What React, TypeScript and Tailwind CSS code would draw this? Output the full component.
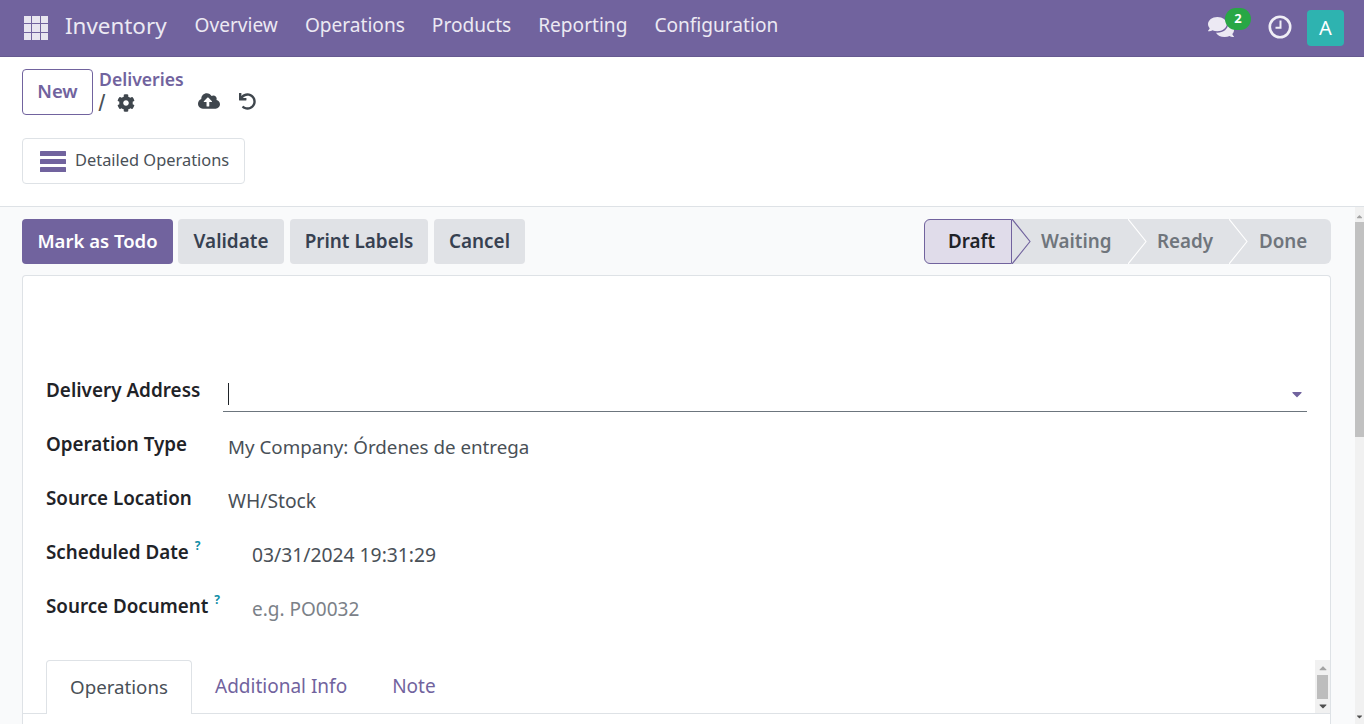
import React from "react";
import { FaComments, FaCog, FaCloudUploadAlt, FaUndo, FaCaretDown, FaCaretUp } from "react-icons/fa";

const FONT = "font-['Noto_Sans','Open_Sans',sans-serif]";

function GridIcon() {
  return (
    <div className="grid grid-cols-3 gap-[1px] w-[24px] h-[24px]">
      {Array.from({ length: 9 }).map((_, i) => (
        <div key={i} className="bg-[#e8e6f0]" />
      ))}
    </div>
  );
}

function ClockIcon() {
  return (
    <svg width="24" height="24" viewBox="0 0 24 24" fill="none" stroke="#f0eef6" className="mb-[2px] mr-[15px]">
      <circle cx="12" cy="12" r="10.2" strokeWidth="2.6" />
      <polyline points="12.5,5.5 12.5,12.8 7.5,12.8" strokeWidth="2" />
    </svg>
  );
}

function BarsIcon() {
  return (
    <svg width="26" height="21" viewBox="0 0 26 21" fill="#71639e" className="mr-[9px] mt-[2px] shrink-0">
      <rect x="0" y="0" width="26" height="5" rx="0.5" />
      <rect x="0" y="8" width="26" height="5" rx="0.5" />
      <rect x="0" y="16" width="26" height="5" rx="0.5" />
    </svg>
  );
}

function Chevron({ stroke, fill, className }: { stroke: string; fill: string; className: string }) {
  return (
    <svg className={`absolute z-10 ${className}`} width="19" height="45" viewBox="0 0 19 45">
      <polyline points="0,0 18,22.5 0,45" fill={fill} stroke={stroke} strokeWidth="1.1" />
    </svg>
  );
}

function Field({ label, help, value, muted, indent, size }: { label: string; help?: boolean; value: string; muted?: boolean; indent?: boolean; size: string }) {
  return (
    <div className="flex h-[54px] shrink-0">
      <div className="w-[177px] shrink-0 pt-[11px] text-[18.8px] leading-[24px] font-semibold text-[#1f2328] flex items-start">
        {label}
        {help && <span className="text-[12px] leading-[14px] font-bold text-[#0f8ea6] ml-[6px] mt-[-1px]">?</span>}
      </div>
      <div className={`${indent ? "pl-[29px]" : "pl-[5px]"} pt-[14px] ${size} leading-[24px] ${muted ? "text-[#7b8188]" : "text-[#495057]"}`}>
        {value}
      </div>
    </div>
  );
}

export default function App() {
  return (
    <div className={`${FONT} w-[1364px] h-[724px] overflow-hidden flex flex-col bg-white`}>
      <nav className="h-[57px] shrink-0 bg-[#71639e] border-b border-[#665a90] flex items-center text-[#f0eef6]">
        <div className="pl-[24px] pr-[17px]"><GridIcon /></div>
        <span className="text-[22.4px] mr-[28px] text-[#ece9f3] pb-[5px]">Inventory</span>
        <div className="flex gap-[27px] text-[19.1px] text-[#ece9f3] pb-[6px]">
          <span>Overview</span><span>Operations</span><span>Products</span><span>Reporting</span><span>Configuration</span>
        </div>
        <div className="ml-auto flex items-center pr-[20px]">
          <div className="relative mr-[34px] mb-[2px]">
            <FaComments className="text-[#ece9f3]" size={26} />
            <span className="absolute -top-[6px] left-[17px] w-[26px] h-[22px] rounded-full bg-[#28a745] text-white text-[13px] font-bold flex items-center justify-center">2</span>
          </div>
          <ClockIcon />
          <div className="w-[37px] h-[36px] rounded-[4px] bg-[#2eb3b0] text-white text-[20px] flex items-center justify-center">A</div>
        </div>
      </nav>

      <header className="h-[150px] shrink-0 bg-white border-b border-[#dee2e6] pl-[22px] pt-[12px] flex flex-col">
        <div className="flex items-start">
          <button className="w-[71px] h-[46px] pb-[2px] rounded-[4px] border border-[#71639e] bg-white text-[#71639e] text-[18.5px] font-semibold">New</button>
          <div className="ml-[6px] flex flex-col">
            <span className="text-[#71639e] text-[17.6px] leading-[22px] font-semibold -mt-[1px]">Deliveries</span>
            <div className="flex items-center h-[25px] text-[#495057]">
              <span className="font-['Liberation_Sans',sans-serif] text-[21px] leading-[24px] w-[18px]"><span className="inline-block scale-[1.15]">/</span></span>
              <FaCog size={18} className="text-[#3f464d]" />
              <FaCloudUploadAlt size={22} className="text-[#3f464d] ml-[63px] mb-[4px]" />
              <FaUndo size={17} className="text-[#3f464d] ml-[19px] mb-[3px]" />
            </div>
          </div>
        </div>
        <div className="mt-[23px]">
          <button className="w-[223px] h-[46px] pb-[2px] rounded-[4px] border border-[#dee2e6] bg-white flex items-center pl-[17px] text-[#495057] text-[16.4px]">
            <BarsIcon />
            Detailed Operations
          </button>
        </div>
      </header>

      <div className="flex-1 min-h-0 flex bg-[#f9fafb]">
        <main className="flex-1 min-w-0 pl-[22px] pr-[24px] pt-[12px] flex flex-col">
          <div className="flex items-start h-[45px] shrink-0 text-[18.9px] font-semibold">
            <button className="w-[151px] h-[45px] pb-[1px] rounded-[4px] bg-[#71639e] text-white text-[18.5px]">Mark as Todo</button>
            <button className="ml-[5px] w-[106px] h-[45px] pb-[1px] rounded-[4px] bg-[#e0e2e6] text-[#374151]">Validate</button>
            <button className="ml-[6px] w-[138px] h-[45px] pb-[1px] rounded-[4px] bg-[#e0e2e6] text-[#374151]">Print Labels</button>
            <button className="ml-[6px] w-[91px] h-[45px] pb-[1px] rounded-[4px] bg-[#e0e2e6] text-[#374151]">Cancel</button>
            <div className="ml-auto flex w-[407px] h-[45px] rounded-[6px] bg-[#e0e2e6] text-[18.8px]">
              <div className="relative w-[88px] h-[45px] pb-[1px] rounded-l-[6px] border border-[#71639e] bg-[#e0dcea] text-[#1f2328] flex items-center pl-[23px]">
                Draft
                <Chevron stroke="#71639e" fill="#e0e2e6" className="-top-px left-[calc(100%+1px)]" />
              </div>
              <div className="relative w-[116px] pb-[1px] text-[#6f757c] flex items-center pl-[29px]">
                Waiting
                <Chevron stroke="#ffffff" fill="none" className="top-0 left-full" />
              </div>
              <div className="relative w-[101px] pb-[1px] text-[#6f757c] flex items-center pl-[29px]">
                Ready
                <Chevron stroke="#ffffff" fill="none" className="top-0 left-full" />
              </div>
              <div className="flex-1 pb-[1px] text-[#6f757c] flex items-center pl-[30px]">Done</div>
            </div>
          </div>

          <section className="mt-[11px] flex-1 min-h-0 bg-white border border-b-0 border-[#dee2e6] rounded-t-[4px] pl-[23px] pr-[23px] flex flex-col">
            <div className="h-[91px] shrink-0" />
            <div className="flex h-[54px] shrink-0">
              <div className="w-[177px] shrink-0 pt-[11px] text-[18.9px] leading-[24px] font-semibold text-[#1f2328]">Delivery Address</div>
              <div className="flex-1 h-[45px] border-b border-[#6c757d] flex items-center justify-between pl-[5px] pr-[2px] pt-[9px]">
                <div className="w-[1px] h-[22px] bg-[#1f2328]" />
                <FaCaretDown size={16} className="text-[#71639e]" />
              </div>
            </div>
            <Field label="Operation Type" value="My Company: Órdenes de entrega" size="text-[18.75px]" />
            <Field label="Source Location" value="WH/Stock" size="text-[19.3px]" />
            <Field label="Scheduled Date" help value="03/31/2024 19:31:29" indent size="text-[19.3px]" />
            <Field label="Source Document" help value="e.g. PO0032" muted indent size="text-[19px]" />
            <div className="mt-[23px] flex h-[54px] shrink-0 -mx-[23px] pl-[23px] border-b border-[#dee2e6]">
              <div className="h-[54px] w-[146px] bg-white border border-b-0 border-[#dee2e6] rounded-t-[4px] text-[#495057] text-[18.7px] flex items-center justify-center">Operations</div>
              <div className="ml-[23px] flex items-center text-[19px] text-[#71639e]">Additional Info</div>
              <div className="ml-[45px] flex items-center text-[19px] text-[#71639e]">Note</div>
              <div className="ml-auto w-[15px] h-[53px] bg-[#f1f1f1] flex flex-col items-center">
                <FaCaretUp size={12} className="text-[#a3a3a3] mt-[2px]" />
                <div className="w-[11px] h-[24px] bg-[#bdbdbd] mt-[1px]" />
                <FaCaretDown size={12} className="text-[#505050] mt-[1px]" />
              </div>
            </div>
            <div className="flex-1" />
          </section>
        </main>

        <div className="w-[9px] shrink-0 bg-[#f1f1f1] flex flex-col items-center">
          <FaCaretUp size={9} className="text-[#a3a3a3] mt-[5px] shrink-0" />
          <div className="w-full h-[215px] bg-[#c1c1c1] shrink-0 mt-px" />
          <div className="flex-1" />
          <FaCaretDown size={9} className="text-[#505050] mb-[3px] shrink-0" />
        </div>
      </div>
    </div>
  );
}
